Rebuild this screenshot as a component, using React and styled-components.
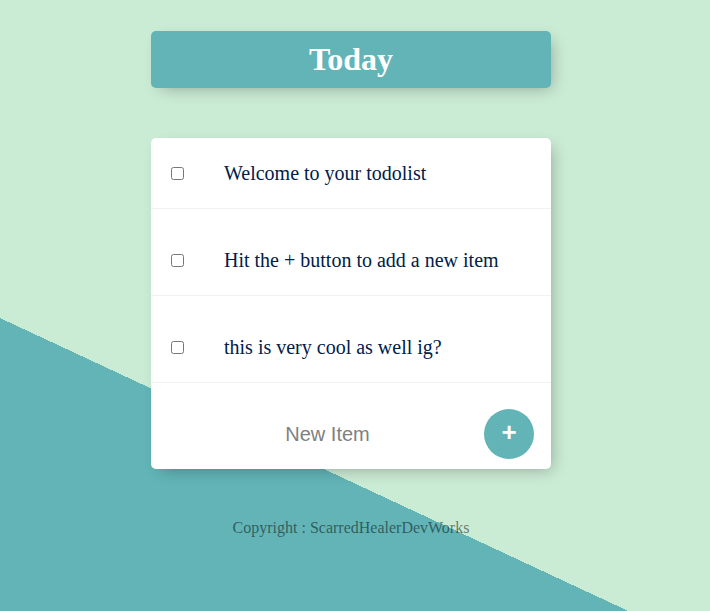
import React from "react";
import styled, { createGlobalStyle } from "styled-components";

const GlobalStyle = createGlobalStyle`
  html, body { margin: 0; padding: 0; }
  body { font-family: "Liberation Serif", "Times New Roman", serif; }
`;

const TEAL = "#62b4b7";
const GREEN = "#caebd4";

const Page = styled.div`
  box-sizing: border-box;
  min-height: 100vh;
  padding: 31px 8px 40px 0;
  background-color: ${GREEN};
  background-image: linear-gradient(25deg, ${TEAL} 31.1%, ${GREEN} 31.1%);
`;

const Box = styled.div`
  max-width: 400px;
  margin: 0 auto 50px;
  background: #fff;
  border-radius: 5px;
  box-shadow: 5px 5px 15px -5px rgba(0, 0, 0, 0.3);
  overflow: hidden;
`;

const HeadingBox = styled(Box)`
  background: ${TEAL};
  text-align: center;
`;

const Title = styled.h1`
  margin: 0;
  padding: 10px;
  color: #fff;
  font-family: "Liberation Serif", "Times New Roman", serif;
  font-size: 32px;
  font-weight: bold;
  line-height: 37px;
`;

const Item = styled.div`
  min-height: 70px;
  padding-top: ${(p) => (p.$offset ? "16px" : "0")};
  display: flex;
  align-items: center;
  border-bottom: ${(p) => (p.$last ? "0" : "1px solid #f1f1f1")};
`;

const Check = styled.input`
  margin: 20px;
  width: 13px;
  height: 13px;
  flex-shrink: 0;
`;

const Text = styled.p`
  margin: 0;
  padding: 20px;
  font-family: "Liberation Serif", "Times New Roman", serif;
  font-size: 20px;
  font-weight: 200;
  color: #00204a;
`;

const NewInput = styled.input`
  margin-left: 20px;
  width: 313px;
  height: 60px;
  padding: 0;
  border: none;
  background: transparent;
  text-align: center;
  font-family: "Liberation Sans", Arial, sans-serif;
  font-size: 20px;
  font-weight: 200;
  &::placeholder { color: grey; opacity: 1; }
  &:focus { outline: none; }
`;

const AddButton = styled.button`
  width: 50px;
  height: 50px;
  border-radius: 50%;
  border: 0;
  background-color: ${TEAL};
  color: #fff;
  font-family: "Liberation Sans", Arial, sans-serif;
  font-size: 26px;
  font-weight: bold;
  line-height: 1;
  padding: 0 0 5px;
  flex-shrink: 0;
  display: flex;
  align-items: center;
  justify-content: center;
`;

const Footer = styled.footer`
  text-align: center;
  color: rgba(0, 0, 0, 0.5);
  font-family: "Liberation Serif", "Times New Roman", serif;
  font-size: 16px;
`;

const items = [
  "Welcome to your todolist",
  "Hit the + button to add a new item",
  "this is very cool as well ig?",
];

export default function App() {
  return (
    <>
      <GlobalStyle />
      <Page>
        <HeadingBox>
          <Title>Today</Title>
        </HeadingBox>
        <Box>
          {items.map((t, i) => (
            <Item key={t} $offset={i > 0}>
              <Check type="checkbox" />
              <Text>{t}</Text>
            </Item>
          ))}
          <Item $offset $last as="form" onSubmit={(e) => e.preventDefault()}>
            <NewInput type="text" placeholder="New Item" />
            <AddButton type="submit">+</AddButton>
          </Item>
        </Box>
        <Footer>Copyright : ScarredHealerDevWorks</Footer>
      </Page>
    </>
  );
}
